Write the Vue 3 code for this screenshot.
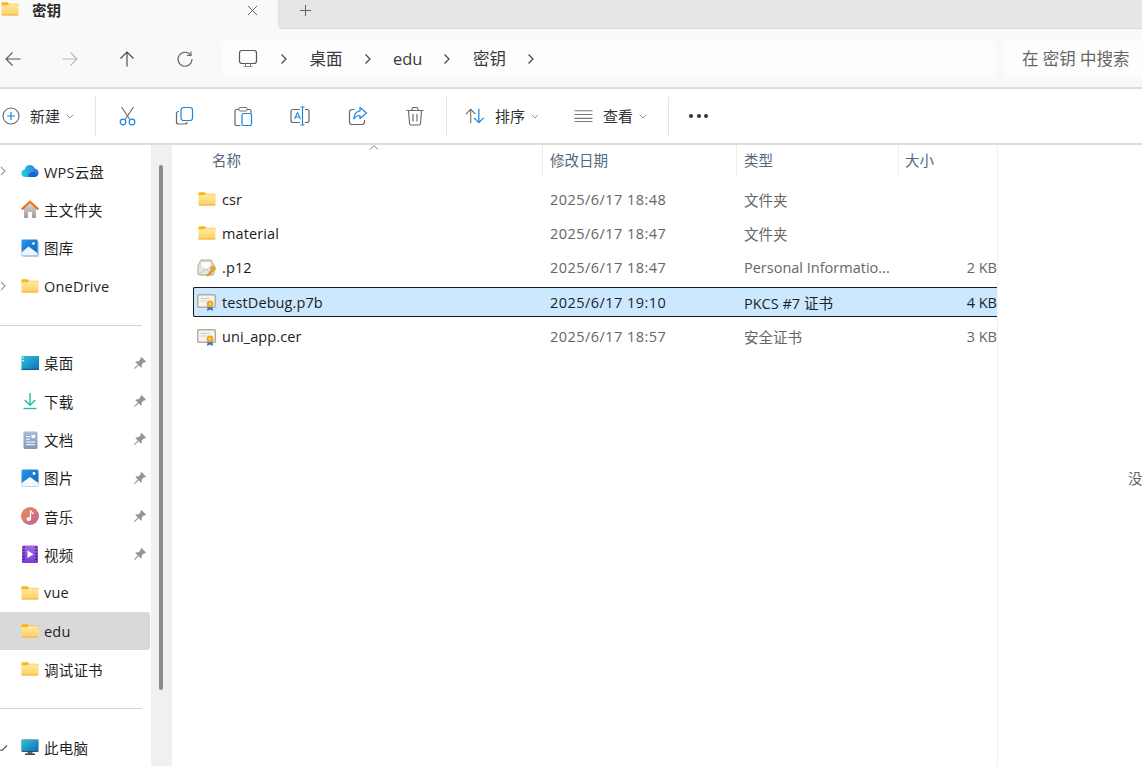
<script setup>
const navButtons = [
  { icon: 'nav-back', off: false },
  { icon: 'nav-forward', off: true },
  { icon: 'nav-up', off: false },
  { icon: 'nav-refresh', off: false }
]
const crumbs = ['桌面', 'edu', '密钥']
const tools = ['t-cut', 't-copy', 't-paste', 't-rename', 't-share', 't-delete']

const quick = [
  { label: 'WPS云盘', icon: 'i-cloud', expand: true },
  { label: '主文件夹', icon: 'i-home' },
  { label: '图库', icon: 'i-gallery' },
  { label: 'OneDrive', icon: 'i-folder', expand: true }
]
const pinned = [
  { label: '桌面', icon: 'i-desktop', pin: true },
  { label: '下载', icon: 'i-download', pin: true },
  { label: '文档', icon: 'i-docs', pin: true },
  { label: '图片', icon: 'i-pictures', pin: true },
  { label: '音乐', icon: 'i-music', pin: true },
  { label: '视频', icon: 'i-video', pin: true },
  { label: 'vue', icon: 'i-folder' },
  { label: 'edu', icon: 'i-folder', active: true },
  { label: '调试证书', icon: 'i-folder' }
]

const columns = [
  { label: '名称', cls: 'c-name' },
  { label: '修改日期', cls: 'c-date' },
  { label: '类型', cls: 'c-type' },
  { label: '大小', cls: 'c-size' }
]
const files = [
  { name: 'csr', icon: 'i-folder', date: '2025/6/17 18:48', type: '文件夹', size: '' },
  { name: 'material', icon: 'i-folder', date: '2025/6/17 18:47', type: '文件夹', size: '' },
  { name: '.p12', icon: 'i-p12', date: '2025/6/17 18:47', type: 'Personal Informatio...', size: '2 KB' },
  { name: 'testDebug.p7b', icon: 'i-cert', date: '2025/6/17 19:10', type: 'PKCS #7 证书', size: '4 KB', selected: true },
  { name: 'uni_app.cer', icon: 'i-cert', date: '2025/6/17 18:57', type: '安全证书', size: '3 KB' }
]
</script>

<template>
  <div class="explorer">
    <!-- icon sprite -->
    <svg class="sprite" aria-hidden="true">
      <defs>
        <linearGradient id="g-folder" x1="0" y1="0" x2="0" y2="1">
          <stop offset="0" stop-color="#ffe9a3" />
          <stop offset="1" stop-color="#fdcf62" />
        </linearGradient>
        <linearGradient id="g-cloud" x1="0" y1="0" x2="1" y2="0">
          <stop offset="0" stop-color="#22d3dc" />
          <stop offset="1" stop-color="#2a6fe0" />
        </linearGradient>
        <linearGradient id="g-desk" x1="0" y1="0" x2="1" y2="1">
          <stop offset="0" stop-color="#2cc3dc" />
          <stop offset="1" stop-color="#0f6fb5" />
        </linearGradient>
        <linearGradient id="g-doc" x1="0" y1="0" x2="0" y2="1">
          <stop offset="0" stop-color="#a9bdd6" />
          <stop offset="1" stop-color="#7e97b8" />
        </linearGradient>
        <linearGradient id="g-pic" x1="0" y1="0" x2="1" y2="1">
          <stop offset="0" stop-color="#2b96e6" />
          <stop offset="1" stop-color="#0c62c0" />
        </linearGradient>
        <linearGradient id="g-music" x1="0" y1="0" x2="1" y2="1">
          <stop offset="0" stop-color="#f0904a" />
          <stop offset="1" stop-color="#bd5fa8" />
        </linearGradient>
        <linearGradient id="g-video" x1="0" y1="0" x2="0" y2="1">
          <stop offset="0" stop-color="#a566e8" />
          <stop offset="1" stop-color="#7a3bdc" />
        </linearGradient>
        <linearGradient id="g-roof" x1="0" y1="0" x2="0" y2="1">
          <stop offset="0" stop-color="#ef8a2a" />
          <stop offset="1" stop-color="#d9661a" />
        </linearGradient>
        <linearGradient id="g-house" x1="0" y1="0" x2="0" y2="1">
          <stop offset="0" stop-color="#d8d8d8" />
          <stop offset="1" stop-color="#9c9c9c" />
        </linearGradient>
      </defs>

      <symbol id="i-folder" viewBox="0 0 18 18">
        <path d="M0.500 3.200c0-.6.4-1 1-1h4.400c.4 0 .7.1 1 .4L8.200 3.800h8.300c.6 0 1 .4 1 1V6H0.500z" fill="#fdb415" />
        <path d="M0.500 5.200h5.600L7.700 4.200h8.800c.6 0 1 .4 1 1v9.300c0 .6-.4 1-1 1h-15c-.6 0-1-.4-1-1z" fill="url(#g-folder)" />
        <path d="M0.500 14.400h17v.2c0 .5-.4.9-1 .9h-15c-.6 0-1-.4-1-.9z" fill="#f2b33c" />
      </symbol>
      <symbol id="i-cloud" viewBox="0 0 18 18">
        <path d="M4.300 15C2 15 .4 13.400.4 11.300c0-1.900 1.300-3.400 3.200-3.700C4 5 6.200 3 8.800 3c2.300 0 4.300 1.500 5 3.600 2.200.3 3.800 2.100 3.800 4.300 0 2.300-1.800 4.100-4.100 4.100z" fill="url(#g-cloud)" />
        <path d="M7 15c0-2.700 2.300-5 5-5 1.800 0 3.400.9 4.300 2.400-.7 1.600-2.100 2.600-3.800 2.600z" fill="#1b4fd0" opacity=".75" />
      </symbol>
      <symbol id="i-home" viewBox="0 0 18 18">
        <path d="M3 8.500L9 3l6 5.500V18H11v-6H7v6H3z" fill="url(#g-house)" />
        <path d="M9 0L0 8.800l1.500 1.500L9 3.200l7.500 7.100L18 8.800z" fill="url(#g-roof)" />
      </symbol>
      <symbol id="i-gallery" viewBox="0 0 18 18">
        <rect x="1.500" y="2" width="16.500" height="16" rx="1.500" fill="#a9cdea" />
        <path d="M0.500 1.500C.5.900.900.500 1.500.500h14c.6 0 1 .4 1 1v14c0 .6-.4 1-1 1h-15z" fill="url(#g-pic)" />
        <path d="M0.500 16.500v-3L7.500 7.500 16.500 14v1.500c0 .6-.4 1-1 1z" fill="#eef6fd" />
        <circle cx="12.500" cy="4.500" r="1.300" fill="#fff" />
      </symbol>
      <symbol id="i-desktop" viewBox="0 0 18 18">
        <rect x="0.500" y="2" width="18" height="14" rx="1" fill="url(#g-desk)" />
        <rect x="1.500" y="3" width="1.500" height="1.300" fill="#e7f8fc" />
        <rect x="1.500" y="6" width="1.500" height="1.300" fill="#e7f8fc" />
        <rect x="0.500" y="14.800" width="18" height="1.200" fill="#0b5d99" />
      </symbol>
      <symbol id="i-download" viewBox="0 0 18 18">
        <path d="M9 1v12M3.800 8L9 13.200 14.200 8" fill="none" stroke="#1cc0a0" stroke-width="1.400" />
        <path d="M2.500 16.500h13" fill="none" stroke="#1cc0a0" stroke-width="1.400" />
      </symbol>
      <symbol id="i-docs" viewBox="0 0 18 18">
        <rect x="2.500" y="0.500" width="14" height="17.500" rx="1.200" fill="url(#g-doc)" />
        <path d="M5 5.500h4M5 8.200h4M5 11h9M5 13.700h9" stroke="#fff" stroke-width="1" />
        <rect x="10.500" y="4" width="3.500" height="3" fill="#fff" />
      </symbol>
      <symbol id="i-pictures" viewBox="0 0 18 18">
        <rect x="0.500" y="0.500" width="17" height="17" rx="1.500" fill="url(#g-pic)" />
        <path d="M0.500 16v-2L9 8l8.500 6v2c0 .9-.6 1.500-1.500 1.500H2c-.9 0-1.500-.6-1.500-1.500z" fill="#f4f9fe" />
        <circle cx="13" cy="4.500" r="1.400" fill="#fff" />
      </symbol>
      <symbol id="i-music" viewBox="0 0 18 18">
        <circle cx="9" cy="9" r="9" fill="url(#g-music)" />
        <path d="M9.500 3.500v8.300" stroke="#fff" stroke-width="1.300" fill="none" />
        <path d="M9.500 3.500c.3 1.800 2.500 2 3 3.500" stroke="#fff" stroke-width="1.200" fill="none" />
        <ellipse cx="7.800" cy="12" rx="2.300" ry="1.900" fill="#fff" />
      </symbol>
      <symbol id="i-video" viewBox="0 0 18 18">
        <rect x="1" y="0.500" width="16" height="17.500" rx="1.500" fill="url(#g-video)" />
        <path d="M2.800 1.500v15.500M15.200 1.500v15.500" stroke="#3d2470" stroke-width="2" stroke-dasharray="1.500 1.500" />
        <path d="M6.500 5.500l6 3.800-6 3.800z" fill="#fff" />
      </symbol>
      <symbol id="i-pc" viewBox="0 0 18 18">
        <rect x="6.500" y="13.500" width="5" height="2.500" fill="#5a6a78" />
        <rect x="4" y="15.500" width="10" height="1.500" fill="#3f4a55" />
        <rect x="0.500" y="1.500" width="17" height="12.500" rx="1" fill="#37505f" />
        <rect x="1" y="2" width="16" height="11" fill="url(#g-desk)" />
      </symbol>
      <symbol id="i-pin" viewBox="0 0 14 14">
        <path d="M8.500 1L13 5.500 11.900 6.600 11 6.300 8.600 8.700c.4 1.200.2 2.300-.5 3L5.600 9.200 1.800 13 1 12.200l3.800-3.800L2.300 5.900c.7-.7 1.800-.9 3-.5L7.700 3 7.400 2.100z" fill="#8f979e" />
      </symbol>
      <symbol id="i-cert" viewBox="0 0 20 18">
        <rect x="0.800" y="1.800" width="17.500" height="12.500" rx="1" fill="#f6f4ef" stroke="#b5ad9c" stroke-width="1.500" />
        <path d="M3.500 5.500h9M3.500 8h6" stroke="#c4ccd4" stroke-width="1" />
        <path d="M10.800 13l-.8 5 3-1.400 3 1.400-.8-5z" fill="#2f6fd0" />
        <circle cx="13" cy="11" r="3.400" fill="#eda821" />
        <circle cx="13" cy="11" r="1.400" fill="#f8cf62" />
      </symbol>
      <symbol id="i-p12" viewBox="0 0 20 18">
        <path d="M1 6.500L4 1h10l3 5.500V15c0 .6-.4 1-1 1H2c-.6 0-1-.4-1-1z" fill="#e9e7e1" stroke="#aaa499" stroke-width="1" />
        <path d="M3.500 8V2.500h10.500V8L9 11z" fill="#fbfaf6" stroke="#cfc9bb" stroke-width=".7" />
        <path d="M1.500 15.500L9 10l7 5.500" fill="none" stroke="#bdb7aa" stroke-width=".8" />
        <circle cx="16" cy="9.500" r="2.900" fill="#e5a840" />
        <path d="M14.500 11l-5.500 5.500 1.500 1 1-1 .8.600 3.800-4.600z" fill="#d8952c" />
      </symbol>

      <symbol id="nav-back" viewBox="0 0 18 18">
        <path d="M16.500 9H2M8.500 2.500L2 9l6.500 6.500" fill="none" stroke="#555" stroke-width="1.100" />
      </symbol>
      <symbol id="nav-forward" viewBox="0 0 18 18">
        <path d="M1.500 9H16M9.500 2.500L16 9l-6.500 6.500" fill="none" stroke="#b8b8b8" stroke-width="1.100" />
      </symbol>
      <symbol id="nav-up" viewBox="0 0 18 18">
        <path d="M9 16.500V2M2.500 8.500L9 2l6.500 6.500" fill="none" stroke="#444" stroke-width="1.100" />
      </symbol>
      <symbol id="nav-refresh" viewBox="0 0 18 18">
        <path d="M14.700 5.200A7 7 0 1 0 16 9" fill="none" stroke="#666" stroke-width="1.100" />
        <path d="M15 1.500v4h-4" fill="none" stroke="#666" stroke-width="1.100" />
      </symbol>
      <symbol id="nav-pc" viewBox="0 0 20 20">
        <rect x="1.500" y="1.500" width="17" height="13" rx="2.500" fill="none" stroke="#555" stroke-width="1.200" />
        <path d="M7.500 14.500v2.500M12.500 14.500v2.500M5.500 17.500h9" stroke="#888" stroke-width="1" fill="none" />
      </symbol>

      <symbol id="t-new" viewBox="0 0 18 18">
        <circle cx="9" cy="9" r="8" fill="none" stroke="#666" stroke-width="1.100" />
        <path d="M9 5v8M5 9h8" stroke="#1a86e0" stroke-width="1.200" />
      </symbol>
      <symbol id="t-cut" viewBox="0 0 20 20">
        <path d="M3.500 1l8 12M15.500 1l-8 12" stroke="#666" stroke-width="1.100" fill="none" />
        <circle cx="5" cy="16" r="2.800" fill="none" stroke="#1a86e0" stroke-width="1.200" />
        <circle cx="14" cy="16" r="2.800" fill="none" stroke="#1a86e0" stroke-width="1.200" />
      </symbol>
      <symbol id="t-copy" viewBox="0 0 20 20">
        <path d="M4 5.500H3.500C2.400 5.500 1.500 6.400 1.500 7.500v8.500c0 1.100.9 2 2 2H10c1.100 0 2-.9 2-2" fill="none" stroke="#666" stroke-width="1.200" />
        <rect x="6" y="1.500" width="11.500" height="13" rx="2.500" fill="#fff" stroke="#1a86e0" stroke-width="1.200" />
      </symbol>
      <symbol id="t-paste" viewBox="0 0 20 20">
        <path d="M6 3.500H3.500C2.500 3.500 2 4.200 2 5v13c0 .8.500 1.500 1.500 1.500h4M14 3.500h2.500c1 0 1.500.7 1.500 1.500v2" fill="none" stroke="#666" stroke-width="1.200" />
        <rect x="6" y="1.500" width="8" height="3.500" rx="1" fill="#fff" stroke="#777" stroke-width="1" />
        <rect x="9" y="7.500" width="9.500" height="12" rx="1.800" fill="#fff" stroke="#1a86e0" stroke-width="1.200" />
      </symbol>
      <symbol id="t-rename" viewBox="0 0 20 20">
        <path d="M10 3.500H3C1.900 3.500 1 4.400 1 5.500v9c0 1.100.9 2 2 2h7M15 3.500h2c1.100 0 2 .9 2 2v9c0 1.100-.9 2-2 2h-2" fill="none" stroke="#666" stroke-width="1.200" />
        <path d="M4.500 13L7.500 6.500l3 6.500M5.500 11h4" fill="none" stroke="#1a86e0" stroke-width="1.100" />
        <path d="M12.500 1v18M10.500 1h4M10.500 19h4" fill="none" stroke="#1a86e0" stroke-width="1.200" />
      </symbol>
      <symbol id="t-share" viewBox="0 0 20 20">
        <path d="M6.500 3.500H4C2.700 3.500 1.500 4.600 1.500 6v10c0 1.400 1.200 2.500 2.500 2.500h10c1.400 0 2.500-1.100 2.500-2.500v-2" fill="none" stroke="#666" stroke-width="1.200" />
        <path d="M12 1.500l6.500 5.500L12 12.500V9.500c-2.700 0-4.700 1-6 3.500 0-4.500 2.300-7.500 6-8z" fill="#fff" stroke="#1a86e0" stroke-width="1.200" stroke-linejoin="round" />
      </symbol>
      <symbol id="t-delete" viewBox="0 0 20 20">
        <path d="M1.500 4.500h17M7 4.500V3c0-.8.7-1.500 1.500-1.500h3c.8 0 1.500.7 1.500 1.500v1.500" fill="none" stroke="#666" stroke-width="1.100" />
        <path d="M3.500 4.500l1 13c.1.900.8 1.500 1.600 1.500h7.800c.8 0 1.500-.6 1.600-1.500l1-13" fill="none" stroke="#666" stroke-width="1.100" />
        <path d="M8 8v7.500M12 8v7.500" stroke="#666" stroke-width="1.100" />
      </symbol>
      <symbol id="t-sort" viewBox="0 0 22 18">
        <path d="M6 16.500V2M1 7l5-5 5 5" fill="none" stroke="#666" stroke-width="1.100" />
        <path d="M14.500 1.500V16M9.500 11l5 5 5-5" fill="none" stroke="#1a86e0" stroke-width="1.300" />
      </symbol>
      <symbol id="t-view" viewBox="0 0 20 14">
        <path d="M0.500 1.500h19M0.500 5.500h19M0.500 9.500h19M0.500 12.800h19" stroke="#777" stroke-width="1.100" />
      </symbol>
    </svg>

    <!-- tab strip -->
    <header class="tabstrip">
      <div class="tab">
        <svg class="ic-18 tab-folder"><use href="#i-folder" /></svg>
        <span class="tab-title">密钥</span>
        <svg class="tab-close" viewBox="0 0 12 12"><path d="M1 1l10 10M11 1L1 11" stroke="#555" stroke-width="1" /></svg>
      </div>
      <div class="tab-rest">
        <svg class="tab-plus" viewBox="0 0 12 12"><path d="M6 0v12M0 6h12" stroke="#555" stroke-width="1" /></svg>
      </div>
    </header>

    <!-- address bar -->
    <div class="navbar">
      <button v-for="b in navButtons" :key="b.icon" class="nav-btn" type="button">
        <svg class="ic-18"><use :href="'#' + b.icon" /></svg>
      </button>
      <div class="address">
        <svg class="addr-pc"><use href="#nav-pc" /></svg>
        <svg class="crumb-sep" viewBox="0 0 8 12"><path d="M1.500 1.500L6 6l-4.500 4.500" fill="none" stroke="#444" stroke-width="1.200" /></svg>
        <template v-for="c in crumbs" :key="c">
          <span class="crumb">{{ c }}</span>
          <svg class="crumb-sep" viewBox="0 0 8 12"><path d="M1.500 1.500L6 6l-4.500 4.500" fill="none" stroke="#444" stroke-width="1.200" /></svg>
        </template>
      </div>
      <div class="search">在 密钥 中搜索</div>
    </div>

    <!-- command bar -->
    <div class="toolbar">
      <div class="tool-new">
        <svg class="ic-18"><use href="#t-new" /></svg>
        <span class="tool-label">新建</span>
        <svg class="chev" viewBox="0 0 8 5"><path d="M.8.800L4 4l3.200-3.200" fill="none" stroke="#888" stroke-width=".9" /></svg>
      </div>
      <i class="tool-sep sep-a"></i>
      <button v-for="t in tools" :key="t" class="tool-btn" type="button">
        <svg class="ic-20"><use :href="'#' + t" /></svg>
      </button>
      <i class="tool-sep sep-b"></i>
      <div class="tool-menu sort">
        <svg class="ic-sort"><use href="#t-sort" /></svg>
        <span class="tool-label">排序</span>
        <svg class="chev" viewBox="0 0 8 5"><path d="M.8.800L4 4l3.200-3.200" fill="none" stroke="#888" stroke-width=".9" /></svg>
      </div>
      <div class="tool-menu view">
        <svg class="ic-view"><use href="#t-view" /></svg>
        <span class="tool-label">查看</span>
        <svg class="chev" viewBox="0 0 8 5"><path d="M.8.800L4 4l3.200-3.200" fill="none" stroke="#888" stroke-width=".9" /></svg>
      </div>
      <i class="tool-sep sep-c"></i>
      <div class="tool-more"><b></b><b></b><b></b></div>
    </div>

    <div class="body">
      <!-- navigation pane -->
      <aside class="sidebar">
        <div class="side-list">
          <div v-for="q in quick" :key="q.label" class="side-row">
            <svg v-if="q.expand" class="side-exp" viewBox="0 0 6 10"><path d="M1 1l4 4-4 4" fill="none" stroke="#999" stroke-width="1.100" /></svg>
            <svg class="ic-18"><use :href="'#' + q.icon" /></svg>
            <span class="side-label">{{ q.label }}</span>
          </div>
          <hr class="side-div div-a" />
          <div v-for="p in pinned" :key="p.label" class="side-row" :class="{ active: p.active }">
            <svg class="ic-18"><use :href="'#' + p.icon" /></svg>
            <span class="side-label">{{ p.label }}</span>
            <svg v-if="p.pin" class="pin"><use href="#i-pin" /></svg>
          </div>
          <hr class="side-div div-b" />
          <div class="side-row">
            <svg class="side-exp open" viewBox="0 0 8 6"><path d="M0 5l2 0.500L7 .5" fill="none" stroke="#555" stroke-width="1.100" /></svg>
            <svg class="ic-18"><use href="#i-pc" /></svg>
            <span class="side-label">此电脑</span>
          </div>
        </div>
        <div class="side-scroll"><div class="side-thumb"></div></div>
      </aside>

      <!-- file list -->
      <main class="files">
        <div class="file-head">
          <svg class="sort-caret" viewBox="0 0 10 5"><path d="M.8 4.500L5 .8l4.200 3.700" fill="none" stroke="#777" stroke-width=".9" /></svg>
          <div v-for="col in columns" :key="col.label" class="head-cell" :class="col.cls">{{ col.label }}</div>
        </div>
        <div class="file-rows">
          <div v-for="f in files" :key="f.name" class="file-row" :class="{ selected: f.selected }">
            <div class="c-name cell-name">
              <svg class="file-ic"><use :href="'#' + f.icon" /></svg>
              <span>{{ f.name }}</span>
            </div>
            <div class="c-date cell cell-date">{{ f.date }}</div>
            <div class="c-type cell">{{ f.type }}</div>
            <div class="c-size cell cell-size">{{ f.size }}</div>
          </div>
        </div>
      </main>

      <!-- preview pane, cut off at the window edge -->
      <section class="preview"><span>没</span></section>
    </div>
  </div>
</template>

<style>
html, body { margin: 0; background: #fff; overflow: hidden; }
</style>

<style scoped>
.explorer {
  width: 1142px;
  height: 766px;
  overflow: hidden;
  display: flex;
  flex-direction: column;
  font-family: "Open Sans", "Noto Sans CJK SC", sans-serif;
  font-size: 14.5px;
  color: #1c1c1c;
  background: #fff;
}
.sprite { position: absolute; width: 0; height: 0; overflow: hidden; }
.ic-18 { width: 18px; height: 18px; flex: none; display: block; }
.ic-20 { width: 20px; height: 20px; display: block; }

.tabstrip { height: 29px; display: flex; background: #f9f9f9; flex: none; }
.tab { width: 278px; display: flex; align-items: flex-start; }
.tab-folder { margin: 0 0 0 1px; }
.tab-title { margin-left: 13px; font-weight: 700; font-size: 14.5px; line-height: 21px; color: #2a2a2a; }
.tab-close { width: 11px; height: 11px; margin-left: 186px; margin-top: 5px; }
.tab-rest {
  flex: 1;
  background: #e6e6e6;
  border-bottom: 1px solid #d9d9d9;
  border-left: 1px solid #e0e0e0;
  border-bottom-left-radius: 5px;
  display: flex;
  padding-left: 21px;
  padding-top: 5px;
  box-sizing: border-box;
}
.tab-plus { width: 11px; height: 11px; }

.navbar {
  height: 56px;
  padding-top: 2px;
  flex: none;
  background: #f9f9f9;
  display: flex;
  align-items: center;
  border-bottom: 2px solid #dedede;
}
.nav-btn {
  width: 57.5px;
  height: 38px;
  flex: none;
  padding: 0;
  border: 0;
  background: none;
  display: flex;
  align-items: center;
  justify-content: center;
}
.nav-btn:first-child { width: 26px; }
.nav-btn:nth-child(2) { margin-left: 15px; }
.address {
  width: 773px;
  margin-left: 8.5px;
  height: 38px;
  flex: none;
  background: #fdfdfd;
  border-radius: 6px;
  display: flex;
  align-items: center;
  box-sizing: border-box;
  padding-left: 16px;
  font-size: 16.5px;
  color: #3a3a3a;
}
.addr-pc { width: 20px; height: 20px; margin-right: 22px; }
.crumb-sep { width: 8px; height: 12px; flex: none; margin-right: 21.5px; }
.crumb { margin-right: 21px; line-height: 20px; }
.search {
  margin-left: 9px;
  flex: 1;
  height: 38px;
  background: #fdfdfd;
  border-radius: 6px 0 0 6px;
  padding-left: 18px;
  line-height: 38px;
  font-size: 16.5px;
  color: #666;
  white-space: nowrap;
  overflow: hidden;
}

.toolbar {
  height: 52px;
  padding-bottom: 1px;
  padding-top: 1px;
  flex: none;
  display: flex;
  align-items: center;
  border-bottom: 2px solid #dedede;
}
.tool-new { display: flex; align-items: center; width: 95px; padding-left: 2px; box-sizing: border-box; }
.tool-label { font-size: 15px; color: #333; line-height: 20px; }
.tool-new .tool-label { margin-left: 10px; }
.chev { width: 8px; height: 5px; flex: none; margin-left: 6px; }
.tool-sep { width: 1px; height: 39px; background: #e6e6e6; flex: none; }
.tool-btn {
  width: 57.5px;
  height: 40px;
  padding: 0;
  border: 0;
  background: none;
  display: flex;
  align-items: center;
  justify-content: center;
  flex: none;
}
.sep-a { margin-right: 3px; }
.sep-b { margin-left: 2px; }
.tool-menu { display: flex; align-items: center; flex: none; }
.sort { margin-left: 18px; width: 109px; }
.ic-sort { width: 21px; height: 18px; margin-right: 9px; }
.view { width: 93px; }
.ic-view { width: 19px; height: 14px; margin-right: 10px; }
.sep-c { margin-left: 1px; }
.tool-more { margin-left: 20px; display: flex; gap: 3.5px; }
.tool-more b { width: 4px; height: 4px; border-radius: 50%; background: #333; display: block; }

.body { flex: 1; display: flex; min-height: 0; }

.sidebar { width: 172px; flex: none; display: flex; }
.side-list { width: 151px; flex: none; padding-top: 7px; box-sizing: border-box; }
.side-row {
  height: 38.3px;
  display: flex;
  align-items: center;
  padding-left: 21px;
  position: relative;
  box-sizing: border-box;
}
.side-row.active { background: #d9d9d9; width: 150px; border-radius: 0 3px 3px 0; }
.side-label { margin-left: 5px; letter-spacing: .2px; color: #1f1f1f; white-space: nowrap; }
.side-exp { position: absolute; left: 0; top: 14px; width: 6px; height: 10px; }
.side-exp.open { width: 8px; height: 6px; top: 17px; }
.pin { position: absolute; left: 133px; top: 12px; width: 14px; height: 14px; }
.side-div { margin: 19.8px 9px 17.8px 0; border: 0; border-top: 1px solid #d5d5d5; }
.div-b { margin-bottom: 18.8px; }
.side-scroll { width: 21px; flex: none; background: #f0f0f0; padding: 20px 0 0 8px; box-sizing: border-box; }
.side-thumb { width: 4px; height: 525px; background: #8a8a8a; border-radius: 2px; }

.files { width: 825px; flex: none; border-right: 1px solid #f1f1f1; overflow: hidden; }
.file-head { display: flex; height: 32px; position: relative; }
.sort-caret { position: absolute; left: 197px; top: 0; width: 10px; height: 5px; }
.head-cell {
  height: 32px;
  line-height: 32px;
  color: #55677d;
  box-sizing: border-box;
  border-right: 1px solid #ededed;
  padding-left: 7px;
  flex: none;
}
.head-cell.c-name { padding-left: 40px; }
.head-cell.c-size { border-right: 0; padding-left: 6px; }
.c-name { width: 371px; }
.c-date { width: 194px; }
.c-type { width: 162px; }
.c-size { width: 98px; }
.file-rows { padding: 7px 0 0 21px; }
.file-row {
  display: flex;
  height: 30px;
  align-items: center;
  margin-bottom: 4.4px;
  box-sizing: border-box;
  border: 1px solid transparent;
  margin-right: -1px;
}
.file-row.selected { background: #cce8ff; border-color: #1a1a1a; border-radius: 2px 0 0 2px; border-right: 0; }
.file-row .c-name { width: 349px; }
.cell-name { display: flex; align-items: center; flex: none; color: #1c1c1c; letter-spacing: .1px; }
.file-ic { width: 20px; height: 18px; margin-left: 3px; margin-right: 5px; flex: none; }
.cell { flex: none; box-sizing: border-box; padding-left: 7px; color: #666; white-space: nowrap; overflow: hidden; }
.cell-date { letter-spacing: .45px; }
.selected .cell { color: #1f1f1f; }
.cell-size { padding-left: 0; text-align: right; }

.preview { flex: 1; position: relative; overflow: hidden; }
.preview span { position: absolute; left: 130px; top: 322px; color: #666; white-space: nowrap; }
</style>
